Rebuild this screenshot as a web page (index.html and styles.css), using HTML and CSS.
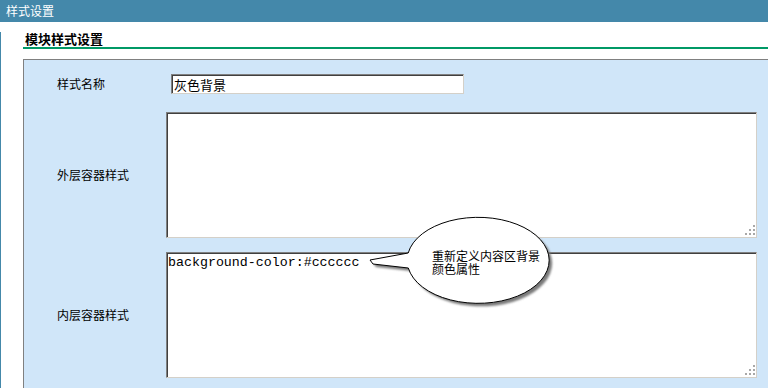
FILE: index.html
```html
<!DOCTYPE html>
<html lang="zh-CN">
<head>
    <meta charset="UTF-8">
    <title>样式设置</title>
    <link rel="stylesheet" href="styles.css">
</head>
<body>
    <div class="titlebar">样式设置</div>
    <div class="page">
        <h3 class="section-title">模块样式设置</h3>
        <div class="form-panel">
            <label class="form-label" for="style-name">样式名称</label>
            <div class="form-field">
                <input class="text-input" id="style-name" value="灰色背景">
            </div>

            <label class="form-label" for="outer-style">外层容器样式</label>
            <div class="form-field area-wrap">
                <textarea class="text-area" id="outer-style"></textarea>
                <svg class="grip" width="11" height="11" viewBox="0 0 11 11">
                    <rect x="9" y="1" width="2" height="2"/>
                    <rect x="5" y="5" width="2" height="2"/>
                    <rect x="9" y="5" width="2" height="2"/>
                    <rect x="1" y="9" width="2" height="2"/>
                    <rect x="5" y="9" width="2" height="2"/>
                    <rect x="9" y="9" width="2" height="2"/>
                </svg>
            </div>

            <label class="form-label" for="inner-style">内层容器样式</label>
            <div class="form-field area-wrap">
                <textarea class="text-area" id="inner-style">background-color:#cccccc</textarea>
                <svg class="grip" width="11" height="11" viewBox="0 0 11 11">
                    <rect x="9" y="1" width="2" height="2"/>
                    <rect x="5" y="5" width="2" height="2"/>
                    <rect x="9" y="5" width="2" height="2"/>
                    <rect x="1" y="9" width="2" height="2"/>
                    <rect x="5" y="9" width="2" height="2"/>
                    <rect x="9" y="9" width="2" height="2"/>
                </svg>
                <!-- callout tip -->
                <div class="callout">
                    <svg width="200" height="96" viewBox="0 0 200 96">
                        <defs>
                            <filter id="soft" x="-10%" y="-10%" width="130%" height="130%">
                                <feGaussianBlur stdDeviation="1.2"/>
                            </filter>
                        </defs>
                        <path class="callout-shadow" filter="url(#soft)" transform="translate(3 3)"
                              d="M43.2 39 L5 46 L8 50 L43.3 54 A71 43 0 1 0 43.2 39 Z"/>
                        <path class="callout-body"
                              d="M43.2 39 L5 46 L8 50 L43.3 54 A71 43 0 1 0 43.2 39 Z"/>
                    </svg>
                    <p class="callout-text">重新定义内容区背景<br>颜色属性</p>
                </div>
            </div>
        </div>
    </div>
</body>
</html>
```

FILE: styles.css
```css
body {
    margin: 0;
    font-family: "Noto Sans CJK SC", "Liberation Sans", sans-serif;
    font-size: 12px;
    color: #000;
    background: #fff;
    overflow: hidden;
}
.titlebar {
    height: 22px;
    line-height: 22px;
    padding-left: 6px;
    background-color: #4488aa;
    color: #fff;
    font-size: 12px;
}
.page {
    border-left: 1px solid #4488aa;
    padding-left: 22px;
    height: 366px;
}
.section-title {
    margin: 10px 0 10px 0;
    padding: 0 0 1px 2px;
    font-size: 13px;
    line-height: 14px;
    font-weight: bold;
    border-bottom: 2px solid #009966;
}
.form-panel {
    display: grid;
    grid-template-columns: 142px 591px;
    grid-auto-rows: auto;
    row-gap: 18px;
    align-items: center;
    padding-top: 14px;
    padding-bottom: 20px;
    background-color: #d0e6f9;
    border-top: 1px solid #808080;
    border-left: 1px solid #808080;
}
.form-panel .area-wrap + .form-label,
.form-panel .area-wrap + .form-label + .form-field {
    margin-top: -4px;
}
.form-label {
    padding-left: 33px;
    font-size: 12px;
    line-height: 14px;
}
.form-field {
    display: flex;
}
.text-input,
.text-area {
    box-sizing: border-box;
    margin: 0;
    background: #fff;
    border: 1px solid;
    border-color: #808080 #d4d0c8 #d4d0c8 #808080;
    box-shadow: inset 1px 1px 0 #404040;
    outline: none;
}
.text-input {
    margin-left: 5px;
    width: 293px;
    height: 20px;
    padding: 0 2px;
    font-family: "Noto Sans CJK SC", sans-serif;
    font-size: 13px;
}
.area-wrap {
    position: relative;
}
.text-area {
    width: 591px;
    height: 126px;
    padding: 2px 1px;
    resize: none;
    overflow: hidden;
    font-family: "Liberation Mono", monospace;
    font-size: 13.3px;
    line-height: 15px;
    color: #000;
}
.grip {
    position: absolute;
    right: 2px;
    bottom: 3px;
    fill: #a8a8a8;
}
.callout {
    position: absolute;
    left: 199px;
    top: -38px;
    width: 200px;
    height: 96px;
}
.callout svg {
    display: block;
}
.callout-shadow {
    fill: #7a7a7a;
}
.callout-body {
    fill: #fff;
    stroke: #000;
    stroke-width: 1;
}
.callout-text {
    position: absolute;
    left: 67px;
    top: 35px;
    margin: 0;
    font-size: 12px;
    line-height: 13px;
    color: #000;
}
```
